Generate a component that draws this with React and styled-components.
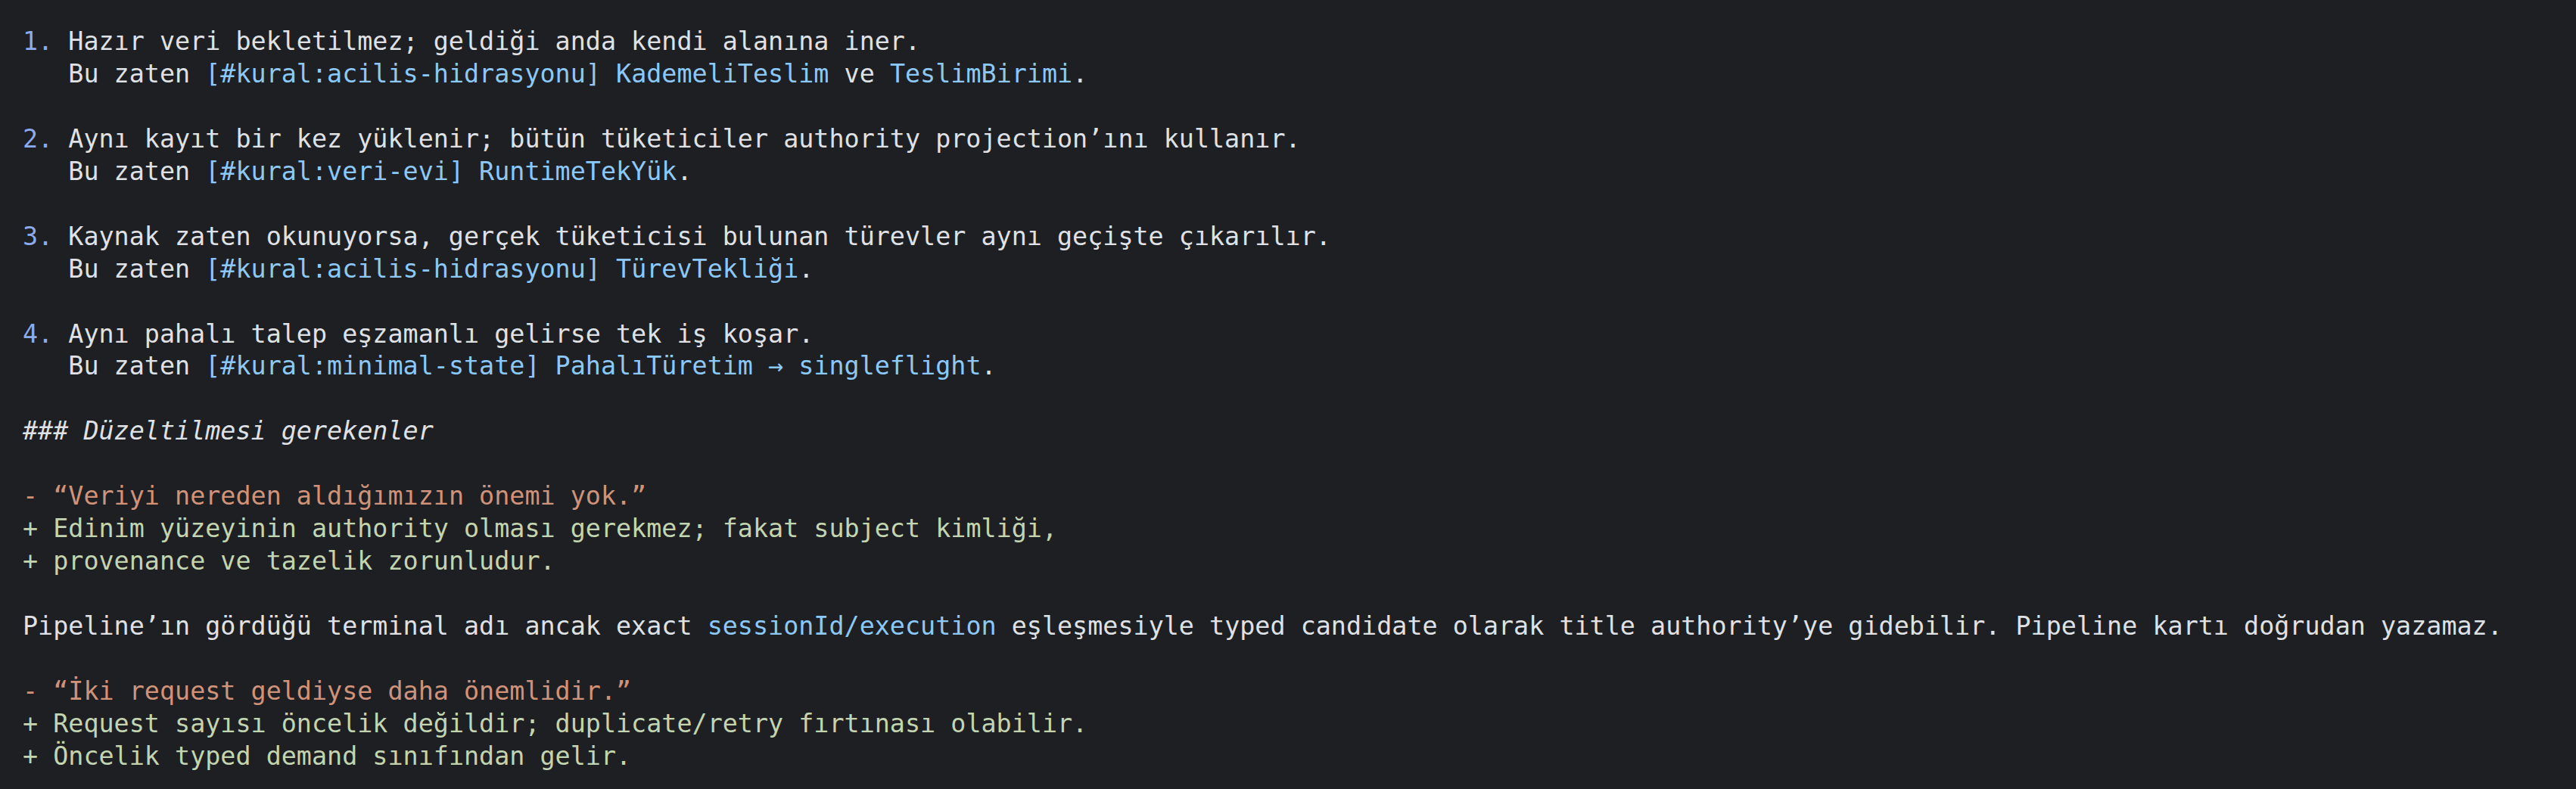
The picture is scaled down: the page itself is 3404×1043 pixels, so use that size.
import React from "react";
import styled, { createGlobalStyle } from "styled-components";

const LINE = "42.95px";

const Global = createGlobalStyle`
  html, body {
    margin: 0;
    padding: 0;
    background: #1e1f22;
  }
  #root {
    min-height: 100vh;
    background: #1e1f22;
  }
`;

const Doc = styled.main`
  box-sizing: border-box;
  min-height: 100vh;
  padding: 34px 30px 0 30px;
  display: flex;
  flex-direction: column;
  gap: ${LINE};
  font-family: "DejaVu Sans Mono", "Liberation Mono", monospace;
  font-size: 33.4px;
  line-height: ${LINE};
  color: #dfe1e5;
  white-space: pre;
`;

const Item = styled.div`
  display: grid;
  grid-template-columns: 3ch 1fr;
`;

const Marker = styled.span`
  color: #8caaee;
`;

const Lines = styled.div`
  display: flex;
  flex-direction: column;
`;

const Line = styled.div`
  color: ${(p) =>
    p.$kind === "del" ? "#d0937a" : p.$kind === "add" ? "#c3d4b0" : "#dfe1e5"};
`;

const Ref = styled.span`
  color: #8cc8f8;
`;

const Heading = styled.div`
  font-style: italic;
  color: #dfe1e5;
`;

const Block = styled.div`
  display: flex;
  flex-direction: column;
`;

const items = [
  {
    n: "1.",
    title: "Hazır veri bekletilmez; geldiği anda kendi alanına iner.",
    refs: [
      { t: "Bu zaten " },
      { t: "[#kural:acilis-hidrasyonu]", r: true },
      { t: " " },
      { t: "KademeliTeslim", r: true },
      { t: " ve " },
      { t: "TeslimBirimi", r: true },
      { t: "." },
    ],
  },
  {
    n: "2.",
    title:
      "Aynı kayıt bir kez yüklenir; bütün tüketiciler authority projection’ını kullanır.",
    refs: [
      { t: "Bu zaten " },
      { t: "[#kural:veri-evi]", r: true },
      { t: " " },
      { t: "RuntimeTekYük", r: true },
      { t: "." },
    ],
  },
  {
    n: "3.",
    title:
      "Kaynak zaten okunuyorsa, gerçek tüketicisi bulunan türevler aynı geçişte çıkarılır.",
    refs: [
      { t: "Bu zaten " },
      { t: "[#kural:acilis-hidrasyonu]", r: true },
      { t: " " },
      { t: "TürevTekliği", r: true },
      { t: "." },
    ],
  },
  {
    n: "4.",
    title: "Aynı pahalı talep eşzamanlı gelirse tek iş koşar.",
    refs: [
      { t: "Bu zaten " },
      { t: "[#kural:minimal-state]", r: true },
      { t: " " },
      { t: "PahalıTüretim → singleflight", r: true },
      { t: "." },
    ],
  },
];

const Segs = ({ parts }) =>
  parts.map((p, i) => (p.r ? <Ref key={i}>{p.t}</Ref> : <span key={i}>{p.t}</span>));

export default function App() {
  return (
    <>
      <Global />
      <Doc>
        {items.map((it) => (
          <Item key={it.n}>
            <Marker>{it.n}</Marker>
            <Lines>
              <Line>{it.title}</Line>
              <Line>
                <Segs parts={it.refs} />
              </Line>
            </Lines>
          </Item>
        ))}
        <Heading>### Düzeltilmesi gerekenler</Heading>
        <Block>
          <Line $kind="del">- “Veriyi nereden aldığımızın önemi yok.”</Line>
          <Line $kind="add">
            + Edinim yüzeyinin authority olması gerekmez; fakat subject kimliği,
          </Line>
          <Line $kind="add">+ provenance ve tazelik zorunludur.</Line>
        </Block>
        <Line>
          Pipeline’ın gördüğü terminal adı ancak exact{" "}
          <Ref>sessionId/execution</Ref> eşleşmesiyle typed candidate olarak title
          authority’ye gidebilir. Pipeline kartı doğrudan yazamaz.
        </Line>
        <Block>
          <Line $kind="del">- “İki request geldiyse daha önemlidir.”</Line>
          <Line $kind="add">
            + Request sayısı öncelik değildir; duplicate/retry fırtınası olabilir.
          </Line>
          <Line $kind="add">+ Öncelik typed demand sınıfından gelir.</Line>
        </Block>
      </Doc>
    </>
  );
}
